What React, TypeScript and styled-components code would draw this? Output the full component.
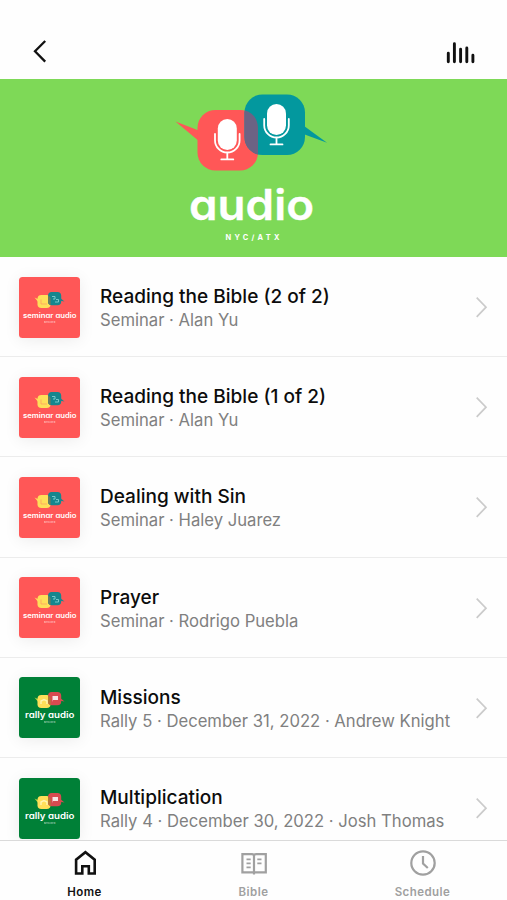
import React from 'react';
import styled, { createGlobalStyle } from 'styled-components';

const GlobalStyle = createGlobalStyle`
  * { box-sizing: border-box; }
  body { margin: 0; background: #fefefe; font-family: Inter, "Liberation Sans", sans-serif; }
`;

const Screen = styled.div`
  width: 507px;
  height: 900px;
  display: flex;
  flex-direction: column;
  overflow: hidden;
  background: #fefefe;
`;

const Header = styled.header`
  flex: none;
  height: 79px;
  padding: 36px 31px 0 32px;
  display: flex;
  align-items: flex-start;
  justify-content: space-between;
`;

const IconButton = styled.button`
  display: flex;
  padding: 0;
  border: 0;
  background: none;
  color: #111;
`;

const Banner = styled.section`
  flex: none;
  height: 178px;
  background: #7ed957;
  color: #fff;
  display: flex;
  flex-direction: column;
  align-items: center;
`;

const BannerArt = styled.svg`
  display: block;
  flex: none;
`;

const List = styled.main`
  flex: 1;
  min-height: 0;
  overflow: hidden;
`;

const Row = styled.article`
  height: 100.2px;
  display: flex;
  align-items: center;
  padding: 1px 19px 0;
  border-bottom: 1px solid #ececec;
`;

const Thumb = styled.div<{ $color: string }>`
  flex: none;
  width: 61px;
  height: 61px;
  border-radius: 3.5px;
  overflow: hidden;
  background: ${(p) => p.$color};
  box-shadow: 0 2px 16px rgba(0, 0, 0, 0.075);
`;

const Copy = styled.div`
  flex: 1;
  margin: 2px 0 0 20px;
  white-space: nowrap;
`;

const Title = styled.h2`
  margin: 0;
  font-size: 19.05px;
  font-weight: 500;
  line-height: 24px;
  color: #0c0c0c;
`;

const Subtitle = styled.p`
  margin: 0;
  font-size: 16.65px;
  line-height: 22px;
  color: #808080;
`;

const Chevron = styled.svg`
  flex: none;
  margin-right: -1px;
`;

const TabBar = styled.nav`
  flex: none;
  height: 60px;
  display: grid;
  grid-template-columns: repeat(3, 1fr);
  border-top: 1px solid #dadada;
  background: #fefefe;
`;

const Tab = styled.div<{ $active?: boolean }>`
  display: flex;
  flex-direction: column;
  align-items: center;
  padding-top: 8px;
  color: ${(p) => (p.$active ? '#111' : '#a0a0a0')};
`;

const TabLabel = styled.span`
  margin-top: 8px;
  font-size: 11.5px;
  line-height: 14px;
  font-weight: 600;
  letter-spacing: 0.45px;
`;

const Wordmark = styled.text<{ $weight?: number }>`
  font-family: Inter, sans-serif;
  font-weight: ${(p) => p.$weight ?? 700};
  font-feature-settings: 'cv11';
`;

function Mic({ x, y }: { x: number; y: number }) {
  return (
    <g transform={`translate(${x} ${y})`}>
      <rect x="-9.5" y="-16" width="19" height="31" rx="9.5" fill="#fff" />
      <path
        d="M-12.3 -1V5.2A12.3 12.3 0 0 0 12.3 5.2V-1M0 17.5V24.2M-6 24.4H6"
        fill="none"
        stroke="#fff"
        strokeWidth="1.8"
        strokeLinecap="round"
      />
    </g>
  );
}

function BannerLogo() {
  return (
    <BannerArt width="507" height="178" viewBox="0 0 507 178">
      <path d="M175.5 42.5L200 52V63Z" fill="#ff5757" />
      <path d="M302 45.5L327 63.8L302 54.5Z" fill="#03989e" />
      <rect x="197.5" y="31" width="60.5" height="60.5" rx="18" fill="#ff5757" />
      <rect x="244.5" y="15.5" width="60.5" height="60.5" rx="18" fill="#03989e" />
      <path
        d="M244.5 58V33.5Q244.5 31.8 245 31.5C253 33.5 258 40.5 258 49V73.5Q258 75.5 257.5 75.4C249.5 73 244.5 66 244.5 58Z"
        fill="#6c6384"
      />
      <Mic x={227.3} y={56} />
      <Mic x={276.5} y={41} />
      <Wordmark $weight={600} x="189" y="140.7" fontSize="42" textLength="125" lengthAdjust="spacingAndGlyphs" fill="#fff" stroke="#fff" strokeWidth="0.3">
        audio
      </Wordmark>
      <Wordmark x="225.5" y="160.5" fontSize="7.4" textLength="54" fill="#fff">
        NYC/ATX
      </Wordmark>
    </BannerArt>
  );
}

function ThumbLogo({ kind }: { kind: Kind }) {
  const seminar = kind === 'seminar';
  const right = seminar ? '#16868e' : '#d84a50';
  return (
    <svg width="61" height="61" viewBox="0 0 61 61">
      <path d="M15.5 20.5L20 22.5V26Z" fill={seminar ? '#ffde59' : '#b8d33f'} />
      <path d="M40 20L45.5 24.5L40 23.5Z" fill={right} />
      <rect x="18.5" y="18" width="13" height="13" rx="3.8" fill="#ffdf59" />
      <rect x="29" y="15" width="13.2" height="13.2" rx="3.8" fill={right} />
      <path d="M29 25V18.5C30.8 19.3 31.6 20.4 31.6 22V28C30 27.5 29 26.5 29 25Z" fill={seminar ? '#697b62' : '#b87735'} />
      {seminar ? (
        <>
          <path d="M22 22.5V27H28" fill="none" stroke="#ff9564" strokeWidth="1" opacity=".65" />
          <path d="M33 19.5H36V22H34M37 22.5H39.5V25H36" fill="none" stroke="#78c8cb" strokeWidth="1" />
        </>
      ) : (
        <>
          <path d="M22 27V24L25 22.5L28 24V27" fill="none" stroke="#fff4b2" strokeWidth="1.4" />
          <path d="M33.5 25V19H39V23H34" fill="#fff" opacity=".85" />
        </>
      )}
      <Wordmark
        $weight={600}
        x={seminar ? 4 : 6}
        y="40.5"
        fontSize={seminar ? 7.2 : 8.6}
        textLength={seminar ? 53.5 : 49.5}
        lengthAdjust="spacingAndGlyphs"
        fill="#fff"
      >
        {seminar ? 'seminar audio' : 'rally audio'}
      </Wordmark>
      <Wordmark x="25" y="46.3" fontSize="2.3" textLength="11.5" fill="#fff" opacity=".65">
        NYC/ATX
      </Wordmark>
    </svg>
  );
}

type Kind = 'seminar' | 'rally';

const items: { kind: Kind; title: string; subtitle: string }[] = [
  { kind: 'seminar', title: 'Reading the Bible (2 of 2)', subtitle: 'Seminar · Alan Yu' },
  { kind: 'seminar', title: 'Reading the Bible (1 of 2)', subtitle: 'Seminar · Alan Yu' },
  { kind: 'seminar', title: 'Dealing with Sin', subtitle: 'Seminar · Haley Juarez' },
  { kind: 'seminar', title: 'Prayer', subtitle: 'Seminar · Rodrigo Puebla' },
  { kind: 'rally', title: 'Missions', subtitle: 'Rally 5 · December 31, 2022 · Andrew Knight' },
  { kind: 'rally', title: 'Multiplication', subtitle: 'Rally 4 · December 30, 2022 · Josh Thomas' },
];

export default function App() {
  return (
    <>
      <GlobalStyle />
      <Screen>
        <Header>
          <IconButton aria-label="Back">
            <svg width="16" height="30" viewBox="0 0 16 30" fill="none" stroke="currentColor" strokeWidth="2.3">
              <path d="M13.2 5L3 15.2L13.2 25.6" />
            </svg>
          </IconButton>
          <IconButton aria-label="Now playing">
            <svg width="30" height="30" viewBox="0 0 30 30" fill="none" stroke="currentColor" strokeWidth="2.9" strokeLinecap="round">
              <path d="M2.3 17.2V25.8M8.4 7.8V25.8M14.6 13.3V25.8M20.8 12V25.8M26.9 19.3V25.8" />
            </svg>
          </IconButton>
        </Header>
        <Banner>
          <BannerLogo />
        </Banner>
        <List>
          {items.map((item) => (
            <Row key={item.title}>
              <Thumb $color={item.kind === 'seminar' ? '#ff5757' : '#008037'}>
                <ThumbLogo kind={item.kind} />
              </Thumb>
              <Copy>
                <Title>{item.title}</Title>
                <Subtitle>{item.subtitle}</Subtitle>
              </Copy>
              <Chevron width="14" height="24" viewBox="0 0 14 24" fill="none" stroke="#cbcbcb" strokeWidth="1.7">
                <path d="M1.7 2.7L11 12.2L1.7 21.8" />
              </Chevron>
            </Row>
          ))}
        </List>
        <TabBar>
          <Tab $active>
            <svg width="28" height="28" viewBox="0 0 28 28" fill="none" stroke="currentColor" strokeWidth="2.6">
              <path d="M5.1 24.5V10.7L14.4 3.2L23.7 10.7V24.5H17.8V17.2H11.3V24.5Z" />
            </svg>
            <TabLabel>Home</TabLabel>
          </Tab>
          <Tab>
            <svg width="28" height="28" viewBox="0 0 28 28" fill="none" stroke="currentColor" strokeWidth="2.2">
              <path d="M2.4 5.2H12Q14 5.2 14 7V25.5M25.8 5.2H16Q14 5.2 14 7M2.4 4.1V23.3H14H25.8V4.1" />
              <path d="M6.5 10.3H10.7M6.5 14.3H10.7M6.5 18.3H10.7M17.3 10.3H21.5M17.3 14.3H21.5" strokeWidth="1.8" />
            </svg>
            <TabLabel>Bible</TabLabel>
          </Tab>
          <Tab>
            <svg width="28" height="28" viewBox="0 0 28 28" fill="none" stroke="currentColor" strokeWidth="2.2">
              <circle cx="14" cy="14" r="11.7" />
              <path d="M14 7V14.5L18.8 19" />
            </svg>
            <TabLabel>Schedule</TabLabel>
          </Tab>
        </TabBar>
      </Screen>
    </>
  );
}
